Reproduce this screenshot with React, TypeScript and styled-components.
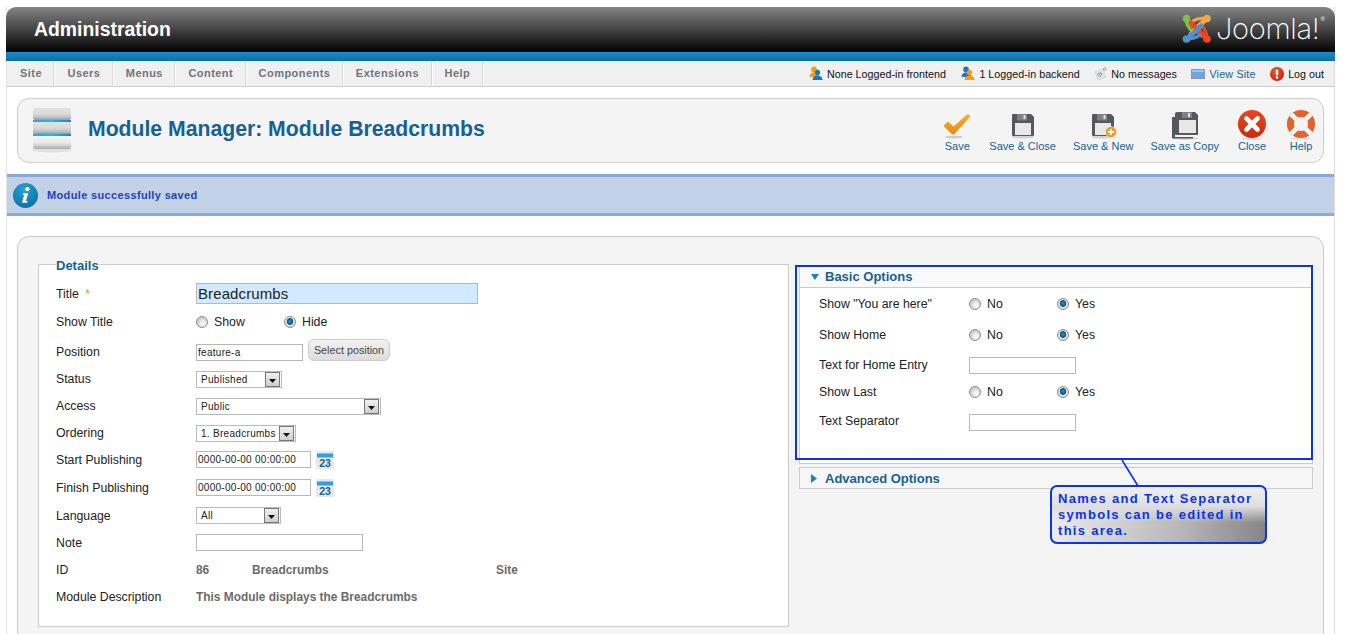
import React from "react";
import styled, { createGlobalStyle } from "styled-components";

const Global = createGlobalStyle`
  html, body { margin: 0; padding: 0; height: 100%; overflow: hidden; background: #fff; }
  body { font-family: "Liberation Sans", Arial, sans-serif; font-size: 12px; color: #222; }
`;

const blue = "#146295";

const Wrapper = styled.div`
  width: 1327px;
  margin: 7px 0 0 6px;
  border-right: 1px solid #ddd;
  border-left: 1px solid #e4e4e4;
`;
const Header = styled.header`
  height: 45px;
  margin: 0 -1px;
  padding: 0 10px 0 28px;
  display: flex;
  align-items: center;
  justify-content: space-between;
  border-radius: 10px 10px 0 0;
  background: linear-gradient(180deg, #858585 0%, #4a4a4a 45%, #000 100%);
`;
const AdminTitle = styled.h1`
  margin: 0;
  font-size: 19.4px;
  font-weight: bold;
  color: #fff;
`;
const Logo = styled.div`
  display: flex;
  align-items: center;
  gap: 3px;
  margin-top: -1px;
`;
const LogoText = styled.span`
  font-family: Inter, Roboto, "Open Sans", sans-serif;
  font-weight: 200;
  font-size: 29px;
  line-height: 30px;
  letter-spacing: -0.3px;
  color: #fff;
`;
const LogoMark = styled.sup`
  font-size: 6px;
  line-height: 7px;
  color: #fff;
  align-self: flex-start;
  margin: 3px 0 0 -2px;
`;
const Band = styled.div`
  height: 9px;
  margin: 0 -1px;
  background: linear-gradient(180deg, #1b8bc7, #0c6ea6);
`;
const SubBar = styled.div`
  height: 25px;
  display: flex;
  justify-content: space-between;
  background: #f0f0f0;
  border-bottom: 1px solid #ccc;
  padding-right: 10px;
`;
const Menu = styled.nav`
  display: flex;
`;
const MenuItem = styled.a`
  display: flex;
  align-items: center;
  padding: 0 11.5px 2px 13px;
  font-size: 11px;
  font-weight: bold;
  letter-spacing: 0.45px;
  color: #70757a;
  border-right: 1px solid #d8d8d8;
  box-shadow: 1px 0 0 #fff;
`;
const Status = styled.div`
  display: flex;
  align-items: center;
  gap: 14.5px;
`;
const StatusItem = styled.span<{ $link?: boolean }>`
  display: flex;
  align-items: center;
  gap: 4px;
  font-size: 10.7px;
  letter-spacing: ${(p) => (p.$link ? 0.2 : 0.03)}px;
  color: ${(p) => (p.$link ? blue : "#111")};
`;
const Toolbar = styled.section`
  height: 63px;
  margin: 11px 10px 0 10px;
  padding: 0 7px 0 12px;
  display: flex;
  align-items: center;
  justify-content: space-between;
  background: #f4f4f4;
  border: 1px solid #ccc;
  border-radius: 12px;
`;
const TitleGroup = styled.div`
  display: flex;
  align-items: center;
  gap: 14px;
`;
const PageTitle = styled.h2`
  margin: 0;
  padding-bottom: 4px;
  font-size: 21.2px;
  font-weight: bold;
  color: ${blue};
`;
const Actions = styled.div`
  display: flex;
  align-items: flex-start;
  margin-bottom: 1px;
`;
const Action = styled.a<{ $gap?: number }>`
  display: flex;
  flex-direction: column;
  align-items: center;
  margin-left: ${(p) => p.$gap ?? 0}px;
  font-size: 11px;
  color: ${blue};
  svg {
    margin-bottom: -1px;
  }
`;
const Message = styled.div`
  height: 36px;
  margin: 11px 0 0 0;
  padding-left: 6px;
  display: flex;
  align-items: center;
  gap: 9px;
  background: #c2d1e5;
  border-top: 3px solid #8ba8de;
  border-bottom: 3px solid #8ba8de;
  font-size: 11px;
  font-weight: bold;
  letter-spacing: 0.35px;
  color: #2342c0;
`;
const Content = styled.main`
  margin: 20px 10px 0 10px;
  padding: 19px 10px 40px 20px;
  display: flex;
  align-items: flex-start;
  gap: 10px;
  background: #f4f4f4;
  border: 1px solid #ccc;
  border-radius: 12px;
`;
const Fieldset = styled.fieldset`
  width: 715px;
  margin: 0;
  padding: 0 17px 15px 17px;
  background: #fff;
  border: 1px solid #ccc;
`;
const Legend = styled.legend`
  padding: 2px 0 0 0;
  font-size: 13px;
  line-height: 15px;
  font-weight: bold;
  color: ${blue};
`;
const FormRows = styled.div`
  padding-top: 8px;
`;
const Row = styled.div<{ $h: number }>`
  height: ${(p) => p.$h}px;
  display: flex;
  align-items: center;
`;
const Label = styled.label<{ $w?: number; $low?: boolean; $raise?: number }>`
  width: ${(p) => p.$w ?? 140}px;
  flex: none;
  padding-top: ${(p) => (p.$low ? 2 : 0)}px;
  padding-bottom: ${(p) => p.$raise ?? 0}px;
  font-size: 12.3px;
  color: #222;
`;
const Star = styled.span`
  color: #f08a1d;
  margin-left: 3px;
`;
const TextInput = styled.input<{ $w: number; $big?: boolean }>`
  width: ${(p) => p.$w}px;
  height: ${(p) => (p.$big ? 21 : 17)}px;
  box-sizing: border-box;
  padding: 0 1px;
  border: 1px solid #b8b8b8;
  background: ${(p) => (p.$big ? "#d2eaff" : "#fff")};
  font-family: "Liberation Sans", Arial, sans-serif;
  font-size: ${(p) => (p.$big ? 15 : 10)}px;
  letter-spacing: ${(p) => (p.$big ? 0.1 : 0.28)}px;
  color: #222;
  outline: none;
`;
const PosButton = styled.button`
  width: 82px;
  height: 22px;
  margin: -5px 0 0 5px;
  padding: 0;
  border: 1px solid #ccc;
  border-radius: 6px;
  background: linear-gradient(180deg, #f2f2f2, #dcdcdc);
  font-family: "Liberation Sans", Arial, sans-serif;
  font-size: 10.8px;
  color: #444;
`;
const SelectBox = styled.div<{ $w: number }>`
  width: ${(p) => p.$w}px;
  height: 17px;
  box-sizing: border-box;
  padding: 0 1px 0 4px;
  display: flex;
  align-items: center;
  justify-content: space-between;
  background: #fff;
  border: 1px solid #bbb;
  font-size: 10px;
  letter-spacing: 0.3px;
  white-space: nowrap;
  color: #222;
`;
const SelectArrow = styled.span`
  width: 15px;
  height: 15px;
  flex: none;
  box-sizing: border-box;
  display: flex;
  align-items: center;
  justify-content: center;
  padding-top: 3px;
  background: linear-gradient(180deg, #f0f0f0, #cfcfcf);
  border: 1px solid #777;
`;
const CalendarSlot = styled.span`
  display: flex;
  margin-left: 5px;
`;
const RadioOption = styled.span`
  width: 88px;
  flex: none;
  display: flex;
  align-items: center;
  gap: 6px;
  font-size: 12.3px;
  color: #222;
`;
const Radio = styled.span<{ $on?: boolean }>`
  width: 12px;
  height: 12px;
  flex: none;
  box-sizing: border-box;
  border-radius: 50%;
  border: 1px solid #8f8f8f;
  background: ${(p) =>
    p.$on
      ? "radial-gradient(circle at 50% 45%, #2a97cf 0, #07527f 3px, #e6e6e6 3.6px, #cfcfcf 6px)"
      : "radial-gradient(circle at 60% 65%, #f8f8f8 0, #f2f2f2 2px, #c8c8c8 6px)"};
`;
const Value = styled.span<{ $w?: number }>`
  width: ${(p) => (p.$w ? `${p.$w}px` : "auto")};
  flex: none;
  font-size: 11.9px;
  font-weight: bold;
  color: #6b6b6b;
`;
const Side = styled.aside`
  position: relative;
  width: 514px;
  margin-top: 10px;
`;
const Panel = styled.div`
  background: #fff;
  border: 1px solid #ccc;
`;
const PanelHead = styled.div<{ $open?: boolean }>`
  height: ${(p) => (p.$open ? 21 : 20)}px;
  box-sizing: border-box;
  padding: 0 0 ${(p) => (p.$open ? 1 : 0)}px 11px;
  display: flex;
  align-items: center;
  gap: 6px;
  background: ${(p) => (p.$open ? "#fafafa" : "#f6f6f6")};
  border-bottom: ${(p) => (p.$open ? "1px solid #ccc" : "0")};
  font-size: 13px;
  font-weight: bold;
  color: ${blue};
`;
const PanelBody = styled.div`
  padding: 0 0 19px 19px;
`;
const ClosedPanel = styled(Panel)`
  margin-top: 3px;
`;
const Highlight = styled.div`
  position: absolute;
  left: -4px;
  top: -1px;
  width: 518px;
  height: 195px;
  box-sizing: border-box;
  border: 2px solid #0a32f0;
  pointer-events: none;
`;
const Pointer = styled.svg`
  position: absolute;
  left: 322px;
  top: 194px;
`;
const Callout = styled.div`
  position: absolute;
  left: 251px;
  top: 219px;
  width: 217px;
  height: 59px;
  box-sizing: border-box;
  padding: 4px 0 0 6px;
  border: 2px solid #0a32f0;
  border-radius: 7px;
  background: linear-gradient(180deg, #f0f0f0 0, #dedede 35%, rgba(220,220,220,0) 65%),
    linear-gradient(97deg, #ededed 0%, #b8b8b8 60%, #858585 100%);
  font-size: 13px;
  line-height: 16px;
  font-weight: bold;
  letter-spacing: 1.3px;
  white-space: nowrap;
  color: #0a32f0;
`;

const Users = ({ flip }: { flip?: boolean }) => (
  <svg width="15" height="15" viewBox="0 0 15 15">
    <g fill={flip ? "#1d78b8" : "#f39a22"}>
      <circle cx="6" cy="3.4" r="2.8" />
      <path d="M1.5 11c0-3 2-4.6 4.5-4.6S11 8 11 11z" />
    </g>
    <g fill={flip ? "#f39a22" : "#1d78b8"}>
      <circle cx="9.5" cy="6.4" r="2.6" />
      <path d="M4.5 14c0-3 2.2-4.6 5-4.6s5 1.6 5 4.6z" />
    </g>
  </svg>
);
const Envelope = () => (
  <svg width="13" height="14" viewBox="0 0 13 14">
    <path d="M1 5l8-3 3 8-8 3z" fill="#dfe5ea" stroke="#c4ccd2" strokeWidth=".6" />
    <path d="M3.2 7.6c1.2-1.6 3.4-1.8 4.6-1-.4 1.4-2 2.8-3.6 2.4" fill="none" stroke="#4f87ad" strokeWidth="1" />
    <circle cx="10.8" cy="2" r="1.3" fill="none" stroke="#7d96a8" strokeWidth=".7" />
  </svg>
);
const Screen = () => (
  <svg width="14" height="10" viewBox="0 0 14 10">
    <rect x=".5" y=".5" width="13" height="9" fill="#6aa5e6" stroke="#8a97a6" />
    <rect x="1" y="1" width="12" height="2" fill="#9cc4ef" />
  </svg>
);
const LogoutIcon = () => (
  <svg width="14" height="14" viewBox="0 0 14 14">
    <defs>
      <radialGradient id="lo" cx=".4" cy=".3" r=".8">
        <stop offset="0" stopColor="#f2562a" />
        <stop offset="1" stopColor="#c81d08" />
      </radialGradient>
    </defs>
    <circle cx="7" cy="7" r="7" fill="url(#lo)" />
    <rect x="5.8" y="2.6" width="2.4" height="6" rx="1" fill="#fff" />
    <circle cx="7" cy="10.6" r="1.3" fill="#fff" />
  </svg>
);
const JoomlaMark = () => (
  <svg width="32" height="32" viewBox="0 0 32 32" fill="none" strokeLinecap="round">
    <path d="M5 6l16 16" stroke="#7ac143" strokeWidth="5" />
    <path d="M5 6c0 6 2 9 6 12" stroke="#7ac143" strokeWidth="3" />
    <circle cx="5.5" cy="5.5" r="3.8" fill="#7ac143" />
    <path d="M26 5L10 21" stroke="#f9a541" strokeWidth="5" />
    <path d="M12 8c4-3 9-3 14-3" stroke="#f9a541" strokeWidth="3" />
    <circle cx="26" cy="5.5" r="3.8" fill="#f9a541" />
    <path d="M10 10l16 16" stroke="#f44321" strokeWidth="5" />
    <path d="M26 26c0-5-1-8-4-12" stroke="#f44321" strokeWidth="3" />
    <circle cx="26" cy="26" r="3.8" fill="#f44321" />
    <path d="M20 13L6 26" stroke="#5091cd" strokeWidth="5" />
    <path d="M6 26c5 0 9-1 13-4" stroke="#5091cd" strokeWidth="3" />
    <circle cx="5.5" cy="26" r="3.8" fill="#5091cd" />
  </svg>
);
const ModuleIcon = () => (
  <svg width="44" height="46" viewBox="0 1 44 46">
    <defs>
      <linearGradient id="bar" x1="0" y1="0" x2="0" y2="1">
        <stop offset="0" stopColor="#e2e2e2" />
        <stop offset=".45" stopColor="#dcdcdc" />
        <stop offset=".75" stopColor="#c4c4c4" />
        <stop offset="1" stopColor="#9a9a9a" />
      </linearGradient>
      <linearGradient id="bar3" x1="0" y1="0" x2="0" y2="1">
        <stop offset="0" stopColor="#f4f4f4" />
        <stop offset=".55" stopColor="#e8e8e8" />
        <stop offset="1" stopColor="#ababab" />
      </linearGradient>
      <linearGradient id="barb" x1="0" y1="0" x2="1" y2="0">
        <stop offset="0" stopColor="#2aa7de" />
        <stop offset=".5" stopColor="#12c0f0" />
        <stop offset="1" stopColor="#1b86c0" />
      </linearGradient>
    </defs>
    <ellipse cx="22" cy="43" rx="20" ry="2.4" fill="#e2e2e2" />
    <rect x="3" y="1" width="38" height="12" rx="2" fill="url(#bar)" />
    <rect x="3" y="13" width="38" height="2" fill="url(#barb)" />
    <rect x="3" y="15" width="38" height="12" rx="1" fill="url(#bar)" />
    <rect x="3" y="27" width="38" height="2" fill="url(#barb)" />
    <rect x="3" y="29" width="38" height="13" rx="2" fill="url(#bar3)" />
  </svg>
);
const Check = () => (
  <svg width="32" height="32" viewBox="0 0 32 32">
    <defs>
      <linearGradient id="ck" x1="0" y1="0" x2="0" y2="1">
        <stop offset="0" stopColor="#fbab2c" />
        <stop offset="1" stopColor="#e78a12" />
      </linearGradient>
    </defs>
    <ellipse cx="13" cy="28" rx="9" ry="1.5" fill="#ccc" />
    <path d="M3 16l4-3.5 5.5 5L25.5 6c1.6-1.4 4.6.4 3 2.6L13.5 25c-.8.8-1.8.8-2.6 0L3 17.5z" fill="url(#ck)" />
  </svg>
);
const FloppyShape = () => (
  <>
    <ellipse cx="16" cy="28" rx="12" ry="1.4" fill="#d2d2d2" />
    <path d="M6 5h18l3 3v18a1 1 0 0 1-1 1H6a1 1 0 0 1-1-1V6a1 1 0 0 1 1-1z" fill="#55585c" />
    <rect x="10" y="5" width="10" height="6.5" fill="#7d8084" />
    <rect x="16.5" y="6" width="2" height="4" fill="#e0e0e0" />
    <path d="M8 14h16v12H8z" fill="#e8e8e8" />
  </>
);
const Floppy = () => (
  <svg width="32" height="32" viewBox="0 0 32 32">
    <FloppyShape />
  </svg>
);
const FloppyNew = () => (
  <svg width="32" height="32" viewBox="0 0 32 32">
    <FloppyShape />
    <circle cx="24" cy="23" r="5.6" fill="#f09a2a" stroke="#fff" strokeWidth=".5" />
    <path d="M24 20v6M21 23h6" stroke="#fff" strokeWidth="1.8" />
  </svg>
);
const FloppyCopy = () => (
  <svg width="32" height="32" viewBox="0 0 32 32">
    <ellipse cx="16" cy="29.4" rx="13" ry="1.3" fill="#d2d2d2" />
    <path d="M3 8h3v20h18v1.4H4a1 1 0 0 1-1-1z" fill="#55585c" />
    <path d="M9 3h17l3 3v19a1 1 0 0 1-1 1H7a1 1 0 0 1-1-1V5a2 2 0 0 1 2-2z" fill="#55585c" />
    <rect x="13" y="3" width="10" height="6" fill="#7d8084" />
    <rect x="19" y="4" width="2" height="4" fill="#e0e0e0" />
    <path d="M10 11h17v13H10z" fill="#e8e8e8" />
  </svg>
);
const CloseIcon = () => (
  <svg width="32" height="32" viewBox="0 0 32 32">
    <defs>
      <linearGradient id="cl" x1="0" y1="0" x2="0" y2="1">
        <stop offset="0" stopColor="#e8481f" />
        <stop offset="1" stopColor="#c92d0c" />
      </linearGradient>
    </defs>
    <ellipse cx="16" cy="29.6" rx="11" ry="1.3" fill="#ddd" />
    <circle cx="16" cy="15" r="14" fill="url(#cl)" />
    <path d="M10.5 9.5L21.5 20.5M21.5 9.5L10.5 20.5" stroke="#fff" strokeWidth="4.6" strokeLinecap="round" />
  </svg>
);
const HelpIcon = () => (
  <svg width="30" height="32" viewBox="0 0 30 32">
    <ellipse cx="15" cy="29.4" rx="10" ry="1.2" fill="#ddd" />
    <circle cx="15" cy="15" r="10.6" fill="none" stroke="#e4622b" strokeWidth="7" />
    <g stroke="#f4f4f4" strokeWidth="4.6">
      <path d="M5 5l7 7M25 5l-7 7M5 25l7-7M25 25l-7-7" />
    </g>
    <circle cx="15" cy="15" r="6.4" fill="#f4f4f4" stroke="#ddd" strokeWidth=".8" />
  </svg>
);
const InfoIcon = () => (
  <svg width="25" height="25" viewBox="0 0 25 25">
    <defs>
      <radialGradient id="inf" cx=".45" cy=".25" r=".85">
        <stop offset="0" stopColor="#27a3d8" />
        <stop offset="1" stopColor="#076a9c" />
      </radialGradient>
    </defs>
    <circle cx="12.5" cy="12.5" r="12.5" fill="url(#inf)" />
    <circle cx="14.4" cy="6.2" r="2.1" fill="#fff" />
    <path d="M10 10.2h5.2l-2.3 8h1.8l-.5 1.6H9l2.2-8H9.6z" fill="#fff" />
  </svg>
);
const Calendar = () => (
  <svg width="18" height="18" viewBox="0 0 18 18">
    <rect width="18" height="18" fill="#e6e8ea" />
    <path d="M1 2h16v4.5H1z" fill="#2f9fe0" />
    <path d="M1 2h16v1H1z" fill="#7cc6f0" />
    <text x="9" y="15.6" textAnchor="middle" fontFamily="Liberation Sans, Arial, sans-serif" fontSize="10.5" fontWeight="bold" fill="#145f92">23</text>
  </svg>
);
const SelectCaret = () => (
  <svg width="7" height="4" viewBox="0 0 7 4">
    <path d="M0 0h7L3.5 4z" fill="#111" />
  </svg>
);
const TriDown = () => (
  <svg width="8" height="6" viewBox="0 0 8 6">
    <path d="M0 0h8L4 6z" fill="#1a85b8" />
  </svg>
);
const TriRight = () => (
  <svg width="8" height="9" viewBox="0 0 8 9">
    <path d="M0 0l6 4.5L0 9z" fill="#1a85b8" />
  </svg>
);

const Select = ({ w, text }: { w: number; text: string }) => (
  <SelectBox $w={w}>
    {text}
    <SelectArrow>
      <SelectCaret />
    </SelectArrow>
  </SelectBox>
);
const RadioPair = ({ a, b, on }: { a: string; b: string; on: 0 | 1 }) => (
  <>
    <RadioOption>
      <Radio $on={on === 0} />
      {a}
    </RadioOption>
    <RadioOption>
      <Radio $on={on === 1} />
      {b}
    </RadioOption>
  </>
);

export default function App() {
  return (
    <>
      <Global />
      <Wrapper>
        <Header>
          <AdminTitle>Administration</AdminTitle>
          <Logo>
            <JoomlaMark />
            <LogoText>Joomla!</LogoText>
            <LogoMark>®</LogoMark>
          </Logo>
        </Header>
        <Band />
        <SubBar>
          <Menu>
            {["Site", "Users", "Menus", "Content", "Components", "Extensions", "Help"].map((m) => (
              <MenuItem key={m}>{m}</MenuItem>
            ))}
          </Menu>
          <Status>
            <StatusItem><Users />None Logged-in frontend</StatusItem>
            <StatusItem><Users flip />1 Logged-in backend</StatusItem>
            <StatusItem><Envelope />No messages</StatusItem>
            <StatusItem $link><Screen />View Site</StatusItem>
            <StatusItem><LogoutIcon />Log out</StatusItem>
          </Status>
        </SubBar>
        <Toolbar>
          <TitleGroup>
            <ModuleIcon />
            <PageTitle>Module Manager: Module Breadcrumbs</PageTitle>
          </TitleGroup>
          <Actions>
            <Action><Check />Save</Action>
            <Action $gap={16}><Floppy />Save &amp; Close</Action>
            <Action $gap={17}><FloppyNew />Save &amp; New</Action>
            <Action $gap={17}><FloppyCopy />Save as Copy</Action>
            <Action $gap={17}><CloseIcon />Close</Action>
            <Action $gap={18}><HelpIcon />Help</Action>
          </Actions>
        </Toolbar>
        <Message>
          <InfoIcon />
          Module successfully saved
        </Message>
        <Content>
          <Fieldset>
            <Legend>Details</Legend>
            <FormRows>
              <Row $h={24}>
                <Label $low>Title <Star>*</Star></Label>
                <TextInput $w={282} $big readOnly defaultValue="Breadcrumbs" />
              </Row>
              <Row $h={33}>
                <Label>Show Title</Label>
                <RadioPair a="Show" b="Hide" on={1} />
              </Row>
              <Row $h={28}>
                <Label>Position</Label>
                <TextInput $w={107} readOnly defaultValue="feature-a" />
                <PosButton>Select position</PosButton>
              </Row>
              <Row $h={26}>
                <Label>Status</Label>
                <Select w={86} text="Published" />
              </Row>
              <Row $h={28}>
                <Label>Access</Label>
                <Select w={185} text="Public" />
              </Row>
              <Row $h={26}>
                <Label>Ordering</Label>
                <Select w={100} text="1. Breadcrumbs" />
              </Row>
              <Row $h={27}>
                <Label>Start Publishing</Label>
                <TextInput $w={115} readOnly defaultValue="0000-00-00 00:00:00" />
                <CalendarSlot><Calendar /></CalendarSlot>
              </Row>
              <Row $h={29}>
                <Label>Finish Publishing</Label>
                <TextInput $w={115} readOnly defaultValue="0000-00-00 00:00:00" />
                <CalendarSlot><Calendar /></CalendarSlot>
              </Row>
              <Row $h={27}>
                <Label>Language</Label>
                <Select w={85} text="All" />
              </Row>
              <Row $h={27}>
                <Label>Note</Label>
                <TextInput $w={167} readOnly />
              </Row>
              <Row $h={27}>
                <Label>ID</Label>
                <Value $w={56}>86</Value>
                <Value $w={244}>Breadcrumbs</Value>
                <Value>Site</Value>
              </Row>
              <Row $h={28}>
                <Label>Module Description</Label>
                <Value>This Module displays the Breadcrumbs</Value>
              </Row>
            </FormRows>
          </Fieldset>
          <Side>
            <Panel>
              <PanelHead $open>
                <TriDown />
                Basic Options
              </PanelHead>
              <PanelBody>
                <Row $h={32}>
                  <Label $w={150}>Show "You are here"</Label>
                  <RadioPair a="No" b="Yes" on={1} />
                </Row>
                <Row $h={29}>
                  <Label $w={150}>Show Home</Label>
                  <RadioPair a="No" b="Yes" on={1} />
                </Row>
                <Row $h={33}>
                  <Label $w={150} $raise={2}>Text for Home Entry</Label>
                  <TextInput $w={107} readOnly />
                </Row>
                <Row $h={19}>
                  <Label $w={150}>Show Last</Label>
                  <RadioPair a="No" b="Yes" on={1} />
                </Row>
                <Row $h={43}>
                  <Label $w={150} $raise={4}>Text Separator</Label>
                  <TextInput $w={107} readOnly />
                </Row>
              </PanelBody>
            </Panel>
            <ClosedPanel>
              <PanelHead>
                <TriRight />
                Advanced Options
              </PanelHead>
            </ClosedPanel>
            <Highlight />
            <Pointer width="20" height="28" viewBox="0 0 20 28">
              <path d="M1 0l16 26" stroke="#0a32f0" strokeWidth="1.6" fill="none" />
            </Pointer>
            <Callout>
              Names and Text Separator
              <br />
              symbols can be edited in
              <br />
              this area.
            </Callout>
          </Side>
        </Content>
      </Wrapper>
    </>
  );
}
